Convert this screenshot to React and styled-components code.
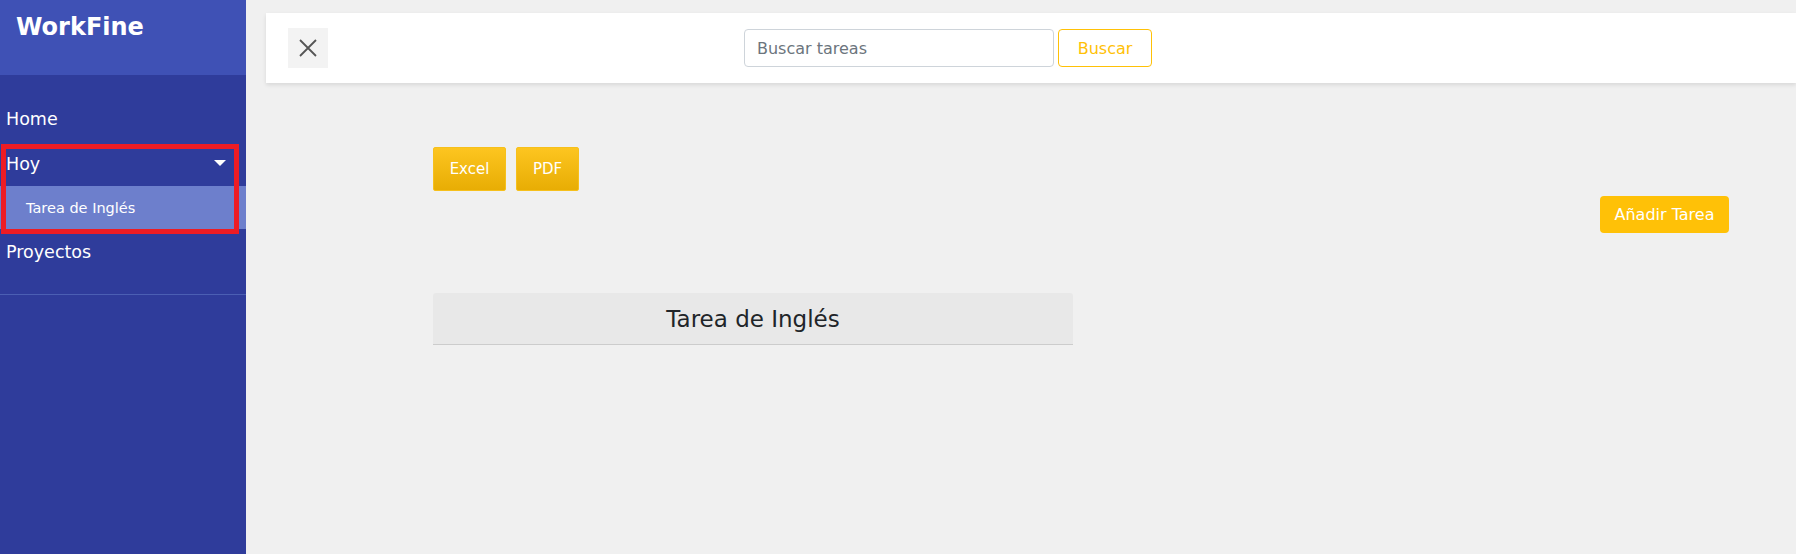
import React from "react";
import styled, { createGlobalStyle } from "styled-components";

const Global = createGlobalStyle`
  html, body { margin: 0; padding: 0; height: 100%; }
  body { font-family: "DejaVu Sans", "Open Sans", sans-serif; background: #f0f0f0; }
  #root { height: 100%; }
  * { box-sizing: border-box; }
`;

const Page = styled.div`
  display: flex;
  width: 1796px;
  height: 554px;
  overflow: hidden;
  background: #f0f0f0;
`;

const Sidebar = styled.aside`
  position: relative;
  width: 246px;
  flex: none;
  background: #2f3c9b;
  display: flex;
  flex-direction: column;
`;

const Brand = styled.div`
  height: 75px;
  background: #3f51b5;
  color: #fff;
  font-size: 24px;
  font-weight: 700;
  padding: 13px 0 0 16px;
`;

const Nav = styled.nav`
  padding-top: 21px;
  display: flex;
  flex-direction: column;
`;

const NavItem = styled.div`
  height: 45px;
  display: flex;
  align-items: center;
  justify-content: space-between;
  padding: 0 20px 0 6px;
  color: #fff;
  font-size: 17.5px;
`;

const SubItem = styled.div`
  height: 43px;
  display: flex;
  align-items: center;
  padding-left: 26px;
  background: #6d7fcc;
  color: #fff;
  font-size: 14.5px;
`;

const Caret = styled.span`
  width: 0;
  height: 0;
  border-left: 6px solid transparent;
  border-right: 6px solid transparent;
  border-top: 6px solid #fff;
  margin-top: -2px;
`;

const Divider = styled.hr`
  margin: 20px 0 0;
  border: 0;
  border-top: 1px solid #4b5fb3;
`;

const Highlight = styled.div`
  position: absolute;
  left: 1px;
  top: 144px;
  width: 238px;
  height: 90px;
  border: 5px solid #ed1c24;
  pointer-events: none;
`;

const Main = styled.main`
  flex: 1;
  padding: 13px 0 0 20px;
  display: flex;
  flex-direction: column;
`;

const TopBar = styled.header`
  height: 70px;
  background: #fff;
  box-shadow: 0 2px 4px rgba(0, 0, 0, 0.1);
  display: flex;
  align-items: center;
  padding-left: 22px;
`;

const CloseButton = styled.button`
  width: 40px;
  height: 40px;
  border: 0;
  background: #f3f3f3;
  display: flex;
  align-items: center;
  justify-content: center;
  padding: 0;
`;

const SearchForm = styled.form`
  display: flex;
  gap: 4px;
  margin-left: 416px;
`;

const SearchInput = styled.input`
  width: 310px;
  height: 38px;
  border: 1px solid #ced4da;
  border-radius: 4px;
  padding: 0 12px;
  font-family: inherit;
  font-size: 16px;
  color: #495057;
  &::placeholder { color: #6c757d; }
`;

const OutlineButton = styled.button`
  width: 94px;
  height: 38px;
  border: 1px solid #ffc107;
  border-radius: 4px;
  background: #fff;
  color: #ffc107;
  font-family: inherit;
  font-size: 16px;
`;

const Content = styled.div`
  padding: 64px 67px 0 167px;
  display: flex;
  flex-direction: column;
`;

const ExportRow = styled.div`
  display: flex;
  gap: 10px;
`;

const ExportButton = styled.button`
  width: ${(p) => p.$w}px;
  height: 44px;
  border: 1px solid #f6c01c;
  border-radius: 2px;
  background: linear-gradient(#fdc520, #e8ad04);
  color: #fff;
  font-family: inherit;
  font-size: 15px;
`;

const AddRow = styled.div`
  display: flex;
  justify-content: flex-end;
  margin-top: 5px;
`;

const AddButton = styled.button`
  width: 129px;
  height: 37px;
  border: 0;
  border-radius: 4px;
  background: #ffc107;
  color: #fff;
  font-family: inherit;
  font-size: 16px;
`;

const TaskHeader = styled.div`
  margin-top: 60px;
  width: 640px;
  height: 52px;
  background: #e8e8e8;
  border-bottom: 1px solid #cccccc;
  border-radius: 3px 3px 0 0;
  display: flex;
  align-items: center;
  justify-content: center;
  color: #212529;
  font-size: 23px;
  font-weight: 400;
`;

export default function App() {
  return (
    <>
      <Global />
      <Page>
        <Sidebar>
          <Brand>WorkFine</Brand>
          <Nav>
            <NavItem>Home</NavItem>
            <NavItem>
              Hoy
              <Caret />
            </NavItem>
            <SubItem>Tarea de Inglés</SubItem>
            <NavItem>Proyectos</NavItem>
          </Nav>
          <Divider />
          <Highlight />
        </Sidebar>
        <Main>
          <TopBar>
            <CloseButton aria-label="close">
              <svg width="20" height="20" viewBox="0 0 20 20">
                <path d="M2 2 L18 18 M18 2 L2 18" stroke="#555" strokeWidth="1.8" fill="none" />
              </svg>
            </CloseButton>
            <SearchForm onSubmit={(e) => e.preventDefault()}>
              <SearchInput placeholder="Buscar tareas" />
              <OutlineButton type="submit">Buscar</OutlineButton>
            </SearchForm>
          </TopBar>
          <Content>
            <ExportRow>
              <ExportButton $w={73}>Excel</ExportButton>
              <ExportButton $w={63}>PDF</ExportButton>
            </ExportRow>
            <AddRow>
              <AddButton>Añadir Tarea</AddButton>
            </AddRow>
            <TaskHeader>Tarea de Inglés</TaskHeader>
          </Content>
        </Main>
      </Page>
    </>
  );
}
